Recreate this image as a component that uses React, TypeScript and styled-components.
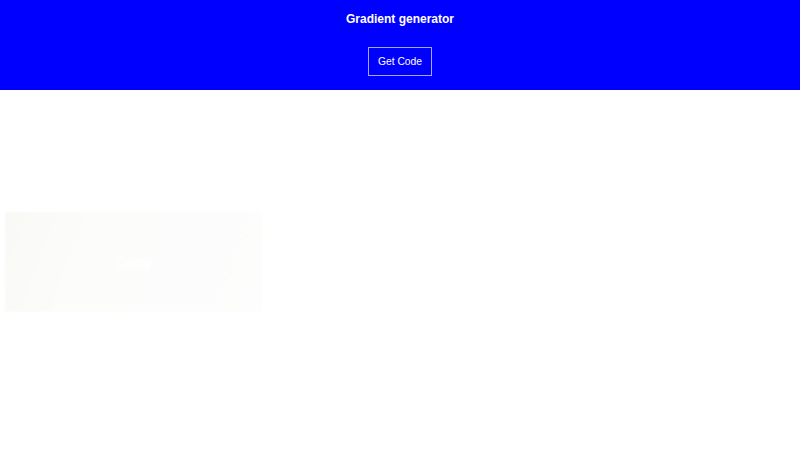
import styled, { createGlobalStyle } from "styled-components";

const GlobalStyle = createGlobalStyle`
  body {
    margin: 0;
    background: #ffffff;
    font-family: "Liberation Sans", Arial, sans-serif;
  }
`;

const Header = styled.header`
  height: 90px;
  background: #0000ff;
  display: flex;
  flex-direction: column;
  align-items: center;
  box-sizing: border-box;
  padding-top: 12px;
`;

const Title = styled.h1`
  margin: 0;
  color: #ffffff;
  font-size: 12px;
  font-weight: bold;
  line-height: 15px;
`;

const CodeButton = styled.button`
  margin-top: 20px;
  width: 64px;
  height: 29px;
  background: transparent;
  border: 1px solid rgba(255, 255, 255, 0.65);
  color: #ffffff;
  font-family: "Liberation Sans", Arial, sans-serif;
  font-size: 10.3px;
  line-height: 12px;
  padding: 1px 0 0;
  cursor: pointer;
`;

const Main = styled.main`
  padding: 122px 0 0 5px;
`;

const PreviewCard = styled.div`
  width: 257px;
  height: 100px;
  background: linear-gradient(110deg, #f9faf6 0%, #fcfcfb 30%, #fdfdfd 100%);
  filter: blur(1px);
  display: flex;
  align-items: center;
  justify-content: center;
`;

const FadedLabel = styled.span`
  color: #ffffff;
  font-size: 14px;
  font-weight: bold;
  text-decoration: underline;
`;

export default function App() {
  return (
    <>
      <GlobalStyle />
      <Header>
        <Title>Gradient generator</Title>
        <CodeButton>Get Code</CodeButton>
      </Header>
      <Main>
        <PreviewCard>
          <FadedLabel>Copy</FadedLabel>
        </PreviewCard>
      </Main>
    </>
  );
}
